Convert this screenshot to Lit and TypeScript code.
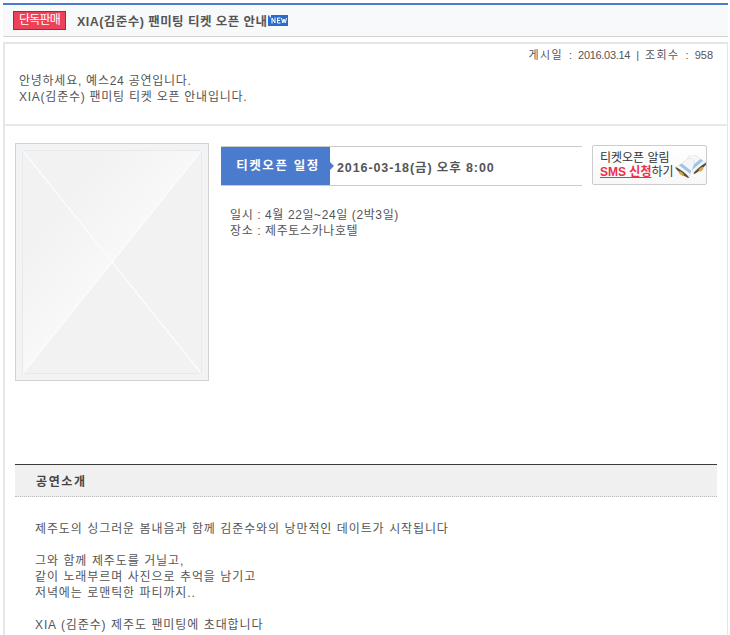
import { LitElement, html, css, svg } from "lit";
import { customElement } from "lit/decorators.js";

const bell = svg`
  <path d="M0 -1 C4 -1 5 4 6 9 C6.500 12 8 14 9 16 L-9 16 C-8 14 -6.500 12 -6 9 C-5 4 -4 -1 0 -1Z" fill="#f4f6f8" stroke="#d4dae0" stroke-width="0.500" />
  <path d="M-6 9 L6 9 L7 12 L-7 12Z" fill="#9cc4e4" />
  <ellipse cx="0" cy="16" rx="8.500" ry="1.400" fill="#5e4e32" />
  <ellipse cx="0" cy="17.300" rx="3" ry="1.500" fill="#d3a650" />
`;

@customElement("app-root")
export class AppRoot extends LitElement {
  static styles = css`
    :host {
      display: block;
      width: 730px;
      height: 635px;
      overflow: hidden;
      background: #fff;
      box-sizing: border-box;
      padding: 3px 2px 0 3px;
      font-family: "Liberation Sans", "Noto Sans CJK KR", sans-serif;
      font-size: 12px;
      color: #444;
    }
    .head {
      height: 34px;
      box-sizing: border-box;
      border-top: 2px solid #4a7bcc;
      border-bottom: 1px solid #d2d2d2;
      background: #f8f9fb;
      display: flex;
      align-items: center;
      padding: 0 0 0 10px;
    }
    .badge {
      width: 53px;
      height: 19px;
      box-sizing: border-box;
      background: #ee4158;
      border: 1px solid #c21a3c;
      color: #fff;
      font-size: 12px;
      letter-spacing: -0.8px;
      line-height: 16px;
      text-align: center;
      margin-right: 11px;
    }
    .title {
      font-size: 12.5px;
      font-weight: 700;
      color: #555;
      letter-spacing: 0.45px;
    }
    .new { display: block; }
    .box {
      margin-top: 5px;
      border-style: solid;
      border-color: #e6e6e6;
      border-width: 2px 1px 0 2px;
      height: 620px;
      box-sizing: border-box;
    }
    .meta {
      display: flex;
      justify-content: flex-end;
      gap: 6px;
      padding: 4px 14px 0 0;
      height: 16px;
      line-height: 14px;
      font-size: 11px;
      color: #555;
    }
    .meta .k { letter-spacing: 1.4px; }
    .meta .n { letter-spacing: -0.3px; }
    .greet {
      padding: 9px 0 0 14px;
      height: 51px;
      line-height: 16px;
      border-bottom: 2px solid #e8e8e8;
      color: #555;
      letter-spacing: 0.75px;
    }
    .main {
      display: flex;
      padding: 17px 0 0 10px;
      height: 338px;
      box-sizing: border-box;
    }
    .poster {
      display: block;
      flex: none;
    }
    .right { margin-left: 12px; width: 486px; }
    .top { display: flex; align-items: flex-start; padding-top: 2px; }
    .ticket {
      width: 361px;
      height: 40px;
      box-sizing: border-box;
      border-top: 1px solid #ccc;
      border-bottom: 1px solid #ccc;
      display: flex;
      align-items: center;
      margin-top: 1px;
    }
    .label {
      width: 109px;
      height: 38px;
      background: #4a7bcc;
      color: #fff;
      font-weight: 700;
      font-size: 12.5px;
      letter-spacing: 1.6px;
      line-height: 38px;
      text-align: center;
      position: relative;
      padding-left: 5px;
      box-sizing: border-box;
    }
    .label::after {
      content: "";
      position: absolute;
      right: -4px;
      top: 15px;
      border-left: 4px solid #4a7bcc;
      border-top: 4px solid transparent;
      border-bottom: 4px solid transparent;
    }
    .date {
      margin-left: 7px;
      font-weight: 700;
      font-size: 12.5px;
      letter-spacing: 0.9px;
      color: #555;
    }
    .sms {
      margin-left: 10px;
      width: 115px;
      height: 40px;
      box-sizing: border-box;
      border: 1px solid #ccc;
      border-radius: 2px;
      display: flex;
      align-items: center;
      justify-content: space-between;
      padding: 0 0 0 7px;
      font-size: 12px;
      line-height: 14px;
      color: #333;
      white-space: nowrap;
      background: linear-gradient(#fff, #f8f8f8);
    }
    .sms b {
      color: #ee2f4f;
      text-decoration: underline;
      font-size: 12px;
    }
    .bell { display: block; flex: none; margin-top: 8px; }
    .info {
      padding: 21px 0 0 9px;
      line-height: 16px;
      color: #555;
      letter-spacing: 0.6px;
    }
    .sec {
      margin: 0 10px;
      height: 33px;
      box-sizing: border-box;
      border-top: 1px solid #3c3c3c;
      border-bottom: 1px dotted #bbb;
      background: #f0f0f0;
      padding-left: 21px;
      line-height: 35px;
      font-weight: 700;
      letter-spacing: 1.6px;
      color: #444;
    }
    .body {
      padding: 24px 0 0 30px;
      line-height: 16px;
      color: #555;
      letter-spacing: 0.88px;
      word-spacing: 0.4px;
    }
    .gap { height: 16px; }
  `;

  render() {
    return html`
      <div class="head">
        <span class="badge">단독판매</span>
        <span class="title">XIA(김준수) 팬미팅 티켓 오픈 안내</span>
        <svg class="new" width="20" height="11" viewBox="0 0 20 11">
          <rect width="20" height="11" fill="#2a6ccb" />
          <path d="M0 0h3v3z" fill="#dce8f8" />
          <path d="M4 8.500V3l3 5V2.500M9.500 3H12.500M9.500 5.500H12M9.500 8H12.500M9.500 3V8M13.500 3l1.300 5 1.200-4 1.200 4 1.300-5" fill="none" stroke="#fff" stroke-width="1" />
        </svg>
      </div>
      <div class="box">
        <div class="meta">
          <span class="k">게시일</span><span>:</span><span class="n">2016.03.14</span><span>|</span><span class="k">조회수</span><span>:</span><span>958</span>
        </div>
        <div class="greet">안녕하세요, 예스24 공연입니다.<br />XIA(김준수) 팬미팅 티켓 오픈 안내입니다.</div>
        <div class="main">
          <svg class="poster" width="194" height="238" viewBox="0 0 194 238">
            <defs>
              <linearGradient id="sheen" gradientUnits="userSpaceOnUse" x1="97" y1="119" x2="37" y2="71">
                <stop offset="0" stop-color="#f8f8f8" />
                <stop offset="1" stop-color="#f2f2f2" />
              </linearGradient>
            </defs>
            <rect x="0.500" y="0.500" width="193" height="237" fill="#f2f3f4" stroke="#d2d2d2" />
            <rect x="7.500" y="7.500" width="179" height="223" fill="#f2f2f2" stroke="#e9e9e9" />
            <path d="M186 8 H8 V230 Z" fill="url(#sheen)" />
            <path d="M8 8 L186 230 M186 8 L8 230" stroke="#fcfcfc" stroke-width="1.500" />
          </svg>
          <div class="right">
            <div class="top">
              <div class="ticket">
                <div class="label">티켓오픈 일정</div>
                <div class="date">2016-03-18(금) 오후 8:00</div>
              </div>
              <div class="sms">
                <div>티켓오픈 알림<br /><b>SMS 신청</b>하기</div>
                <svg class="bell" width="32" height="28" viewBox="0 0 32 28">
                  <g transform="translate(16 1) rotate(-40)">${bell}</g>
                  <g transform="translate(18 5) rotate(38)">${bell}</g>
                </svg>
              </div>
            </div>
            <div class="info">일시 : 4월 22일~24일 (2박3일)<br />장소 : 제주토스카나호텔</div>
          </div>
        </div>
        <div class="sec">공연소개</div>
        <div class="body">
          제주도의 싱그러운 봄내음과 함께 김준수와의 낭만적인 데이트가 시작됩니다
          <div class="gap"></div>
          그와 함께 제주도를 거닐고,<br />
          같이 노래부르며 사진으로 추억을 남기고<br />
          저녁에는 로맨틱한 파티까지..
          <div class="gap"></div>
          XIA (김준수) 제주도 팬미팅에 초대합니다
        </div>
      </div>
    `;
  }
}
